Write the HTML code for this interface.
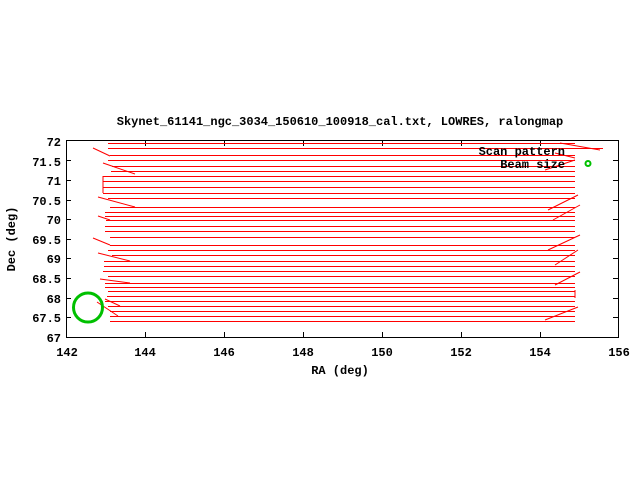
<!DOCTYPE html>
<html><head><style>
body{margin:0;background:#fff;}
svg text{font-family:"Liberation Mono",monospace;font-weight:bold;font-size:12px;fill:#000;}
</style></head><body>
<svg width="640" height="480" xmlns="http://www.w3.org/2000/svg">
<rect width="640" height="480" fill="#fff"/>
<text x="340" y="125" text-anchor="middle">Skynet_61141_ngc_3034_150610_100918_cal.txt, LOWRES, ralongmap</text>
<g stroke="#000" fill="none" stroke-width="1" shape-rendering="crispEdges">
<rect x="66.5" y="140.5" width="552" height="197"/>
<path d="M145.5 337v-5M224.5 337v-5M303.5 337v-5M382.5 337v-5M461.5 337v-5M540.5 337v-5M145.5 141v5M224.5 141v5M303.5 141v5M382.5 141v5M461.5 141v5M540.5 141v5"/>
<path d="M66 160.5h5M66 180.5h5M66 200.5h5M66 219.5h5M66 239.5h5M66 258.5h5M66 278.5h5M66 298.5h5M66 317.5h5M618 160.5h-5M618 180.5h-5M618 200.5h-5M618 219.5h-5M618 239.5h-5M618 258.5h-5M618 278.5h-5M618 298.5h-5M618 317.5h-5"/>
</g>
<g text-anchor="end">
<text x="61" y="146">72</text><text x="61" y="166">71.5</text><text x="61" y="185">71</text><text x="61" y="205">70.5</text><text x="61" y="224">70</text><text x="61" y="244">69.5</text><text x="61" y="263">69</text><text x="61" y="283">68.5</text><text x="61" y="303">68</text><text x="61" y="322">67.5</text><text x="61" y="342">67</text>
</g>
<g text-anchor="middle">
<text x="67" y="356">142</text><text x="145" y="356">144</text><text x="224" y="356">146</text><text x="303" y="356">148</text><text x="382" y="356">150</text><text x="461" y="356">152</text><text x="540" y="356">154</text><text x="619" y="356">156</text>
<text x="340" y="374">RA (deg)</text>
</g>
<text transform="translate(15,239) rotate(-90)" text-anchor="middle">Dec (deg)</text>
<g stroke="#f00" fill="none" stroke-width="1" shape-rendering="crispEdges">
<path d="M108 143.5H575M108 148.5H603M110 155.5H575M108 160.5H575M112 166.5H575M111 171.5H575M103 176.5H575M103 181.5H575M103 187.5H575M103 193.5H575M108 198.5H575M110 207.5H575M105 212.5H575M105 216.5H575M106 220.5H575M105 226.5H575M105 231.5H575M110 237.5H575M110 245.5H575M108 250.5H575M112 255.5H575M104 261.5H575M104 266.5H575M103 271.5H575M108 276.5H575M105 283.5H575M105 287.5H575M108 291.5H575M107 296.5H575M105 301.5H575M108 306.5H575M110 311.5H575M110 316.5H575M110 321.5H575"/>
</g>
<g stroke="#f00" fill="none" stroke-width="1">
<path d="M93 148L110 156M103 163L135 174M103 176L103 193M98 197L135 207M98 216L110 220M93 238L110 245M98 253L130 261M100 279L130 283M105 299L120 306M97 302L118 316M560 143L600 150M555 153L575 158M545 170L575 160M548 210L578 195M553 220L580 205M548 250L580 235M555 265L578 250M555 285L580 272M545 320L578 307M575 290L575 298"/>
</g>
<text x="565" y="155" text-anchor="end">Scan pattern</text>
<text x="565" y="168" text-anchor="end">Beam size</text>
<circle cx="588" cy="163.5" r="2.5" fill="none" stroke="#00c000" stroke-width="2"/>
<circle cx="88" cy="307.5" r="14.5" fill="none" stroke="#00c000" stroke-width="3"/>
</svg>
</body></html>
